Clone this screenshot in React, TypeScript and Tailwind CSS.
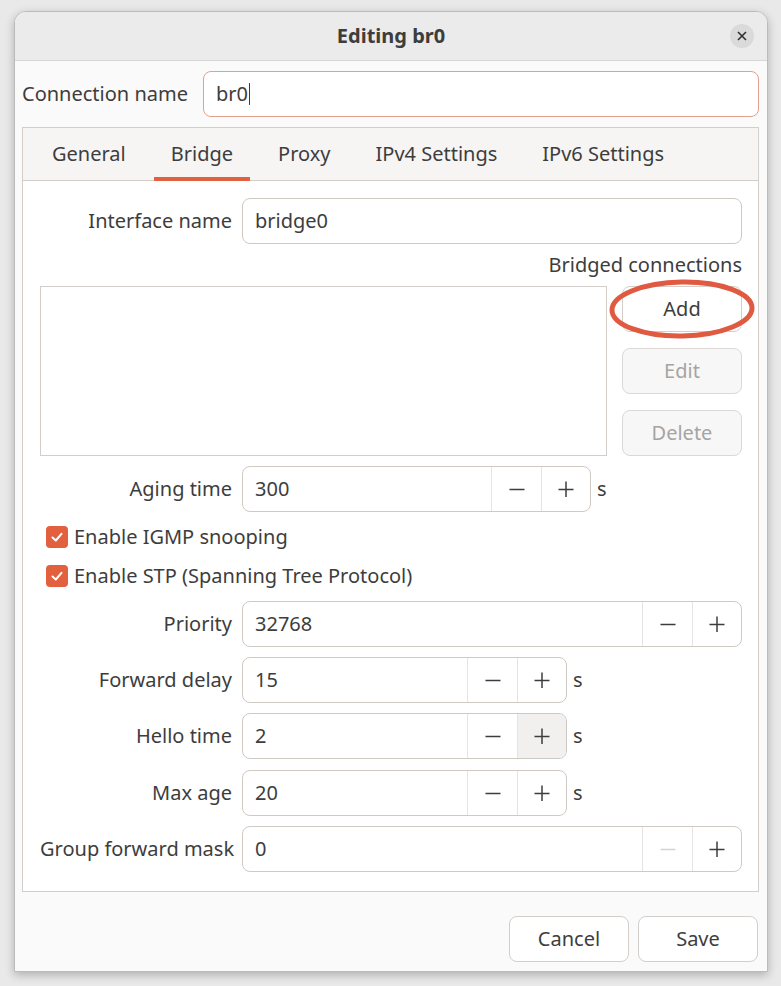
import React from "react";

function Minus({ className = "" }: { className?: string }) {
  return (
    <svg width="18" height="18" viewBox="0 0 18 18" className={className}>
      <line x1="1.5" y1="9.5" x2="16.5" y2="9.5" stroke="currentColor" strokeWidth="1.5" />
    </svg>
  );
}
function Plus({ className = "" }: { className?: string }) {
  return (
    <svg width="18" height="18" viewBox="0 0 18 18" className={className}>
      <line x1="1.5" y1="9.5" x2="16.5" y2="9.5" stroke="currentColor" strokeWidth="1.5" />
      <line x1="9" y1="1.5" x2="9" y2="17" stroke="currentColor" strokeWidth="1.5" />
    </svg>
  );
}

function Spin({
  value,
  width,
  unit,
  hoverPlus,
  disabledMinus,
}: {
  value: string;
  width?: string;
  unit?: boolean;
  hoverPlus?: boolean;
  disabledMinus?: boolean;
}) {
  return (
    <div className="flex items-center">
      <div
        className={`flex h-[46px] rounded-[8px] border border-[#cfc9c4] bg-white overflow-hidden ${width ?? "w-[500px]"}`}
      >
        <div className="flex-1 flex items-center pl-[12px] text-[#3d3d3d]">{value}</div>
        <div
          className={`w-[50px] flex items-center justify-center border-l border-[#e6e3e0] ${disabledMinus ? "text-[#d6d2cf]" : "text-[#3d3d3d]"}`}
        >
          <Minus />
        </div>
        <div
          className={`w-[49px] flex items-center justify-center border-l border-[#e6e3e0] text-[#3d3d3d] ${hoverPlus ? "bg-[#f1f0ef]" : ""}`}
        >
          <Plus />
        </div>
      </div>
      {unit && <span className="ml-[6px] text-[#3d3d3d]">s</span>}
    </div>
  );
}

function Row({ label, children }: { label: string; children: React.ReactNode }) {
  return (
    <div className="flex items-center">
      <div className="w-[192px] text-right text-[#3d3d3d] whitespace-nowrap">{label}</div>
      <div className="ml-[10px]">{children}</div>
    </div>
  );
}

function Check({ label }: { label: string }) {
  return (
    <div className="flex items-center pl-[6px] h-[24px]">
      <div className="w-[22px] h-[22px] rounded-[4px] bg-[#e3603f] flex items-center justify-center">
        <svg width="14" height="14" viewBox="0 0 14 14">
          <path d="M2.5 7.5 L5.8 10.5 L11.5 3.8" fill="none" stroke="white" strokeWidth="2" strokeLinecap="round" strokeLinejoin="round" />
        </svg>
      </div>
      <span className="ml-[6px] text-[#3d3d3d]">{label}</span>
    </div>
  );
}

export default function App() {
  const tabs = ["General", "Bridge", "Proxy", "IPv4 Settings", "IPv6 Settings"];
  return (
    <div className="w-[781px] h-[986px] bg-[#e9e9e9] pt-[11px] pl-[14px] font-['Noto_Sans',sans-serif] text-[20px] leading-none">
      <div className="w-[754px] h-[961px] rounded-t-[12px] border border-[#bdbab7] bg-[#fafafa] shadow-[0_3px_10px_rgba(0,0,0,0.25)] flex flex-col overflow-hidden">
        {/* Title bar */}
        <div className="relative h-[49px] shrink-0 bg-[#ebebeb] border-b border-[#d8d5d2] flex items-center justify-center">
          <span className="font-bold text-[#3d3d3d]">Editing br0</span>
          <div className="absolute right-[13px] top-[12px] w-[24px] h-[24px] rounded-full bg-[#dadada] flex items-center justify-center">
            <svg width="10" height="10" viewBox="0 0 10 10">
              <path d="M1 1 L9 9 M9 1 L1 9" stroke="#2e2e2e" strokeWidth="1.6" />
            </svg>
          </div>
        </div>
        {/* Body */}
        <div className="flex-1 flex flex-col pl-[7px] pr-[8px] pt-[10px]">
          <div className="flex items-center">
            <span className="w-[181px] text-[#3d3d3d] whitespace-nowrap">Connection name</span>
            <div className="flex-1 h-[46px] rounded-[8px] border border-[#e2a08e] bg-white flex items-center pl-[12px] text-[#3d3d3d]">
              br0<span className="inline-block w-[1px] h-[22px] bg-[#3d3d3d] ml-[1px]" />
            </div>
          </div>
          {/* Notebook */}
          <div className="mt-[10px] h-[765px] border border-[#d3cec9] bg-white flex flex-col">
            <div className="h-[53px] shrink-0 bg-[#f6f5f4] border-b border-[#d3cec9] flex items-stretch pl-[12px]">
              {tabs.map((t) => (
                <div key={t} className="relative flex items-center px-[17px] mr-[11px] text-[#3d3d3d]">
                  {t}
                  {t === "Bridge" && (
                    <div className="absolute left-0 right-0 bottom-[-1px] h-[4px] bg-[#e3603f]" />
                  )}
                </div>
              ))}
            </div>
            <div className="flex-1 flex flex-col pl-[17px] pr-[16px] pt-[17px]">
              <Row label="Interface name">
                <div className="w-[500px] h-[46px] rounded-[8px] border border-[#cfc9c4] bg-white flex items-center pl-[12px] text-[#3d3d3d]">
                  bridge0
                </div>
              </Row>
              <div className="mt-[11px] text-right text-[#3d3d3d]">Bridged connections</div>
              <div className="mt-[11px] flex">
                <div className="w-[567px] h-[170px] border border-[#d3cec9] bg-white" />
                <div className="ml-[15px] flex flex-col gap-[16px]">
                  <div className="relative">
                    <div className="w-[120px] h-[46px] rounded-[8px] border border-[#d3cec9] bg-white flex items-center justify-center text-[#3d3d3d]">
                      Add
                    </div>
                    <svg
                      width="154"
                      height="66"
                      viewBox="0 0 154 66"
                      className="absolute left-[-14px] top-[-10px] pointer-events-none"
                    >
                      <ellipse cx="74" cy="33" rx="70" ry="27" fill="none" stroke="#e05a42" strokeWidth="5" transform="rotate(-1 74 33)" />
                    </svg>
                  </div>
                  <div className="w-[120px] h-[46px] rounded-[8px] border border-[#dcd8d5] bg-[#f7f7f7] flex items-center justify-center text-[#a7a4a2]">
                    Edit
                  </div>
                  <div className="w-[120px] h-[46px] rounded-[8px] border border-[#dcd8d5] bg-[#f7f7f7] flex items-center justify-center text-[#a7a4a2]">
                    Delete
                  </div>
                </div>
              </div>
              <div className="mt-[10px]">
                <Row label="Aging time">
                  <Spin value="300" width="w-[349px]" unit />
                </Row>
              </div>
              <div className="mt-[13px]">
                <Check label="Enable IGMP snooping" />
              </div>
              <div className="mt-[15px]">
                <Check label="Enable STP (Spanning Tree Protocol)" />
              </div>
              <div className="mt-[13px] flex flex-col gap-[10px]">
                <Row label="Priority">
                  <Spin value="32768" />
                </Row>
                <Row label="Forward delay">
                  <Spin value="15" width="w-[325px]" unit />
                </Row>
                <Row label="Hello time">
                  <Spin value="2" width="w-[325px]" unit hoverPlus />
                </Row>
                <div className="mt-[1px]">
                  <Row label="Max age">
                    <Spin value="20" width="w-[325px]" unit />
                  </Row>
                </div>
                <Row label="Group forward mask">
                  <Spin value="0" disabledMinus />
                </Row>
              </div>
            </div>
          </div>
          {/* Footer */}
          <div className="mt-[24px] flex justify-end gap-[9px] pr-[1px]">
            <div className="w-[120px] h-[46px] rounded-[8px] border border-[#d3cec9] bg-white flex items-center justify-center text-[#3d3d3d]">
              Cancel
            </div>
            <div className="w-[120px] h-[46px] rounded-[8px] border border-[#d3cec9] bg-white flex items-center justify-center text-[#3d3d3d]">
              Save
            </div>
          </div>
        </div>
      </div>
    </div>
  );
}
